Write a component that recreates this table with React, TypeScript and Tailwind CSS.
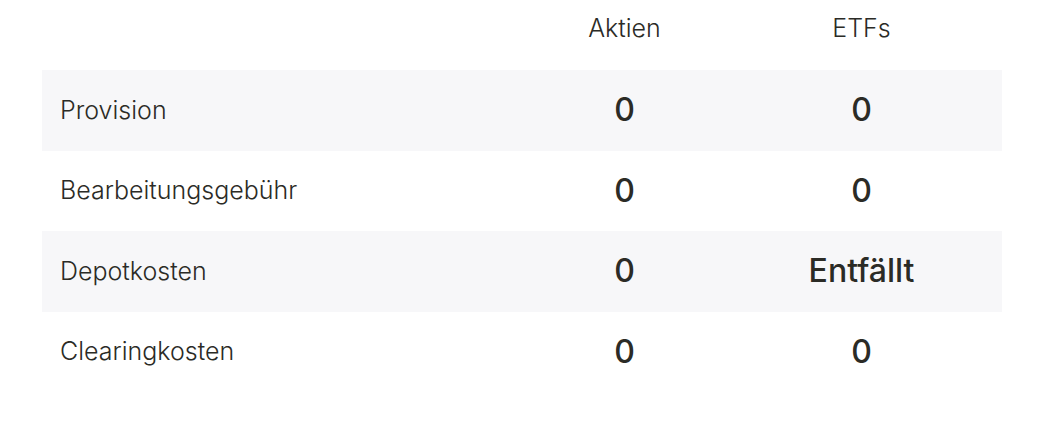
const rows = [
  { label: 'Provision', aktien: '0', etfs: '0' },
  { label: 'Bearbeitungsgebühr', aktien: '0', etfs: '0' },
  { label: 'Depotkosten', aktien: '0', etfs: 'Entfällt' },
  { label: 'Clearingkosten', aktien: '0', etfs: '0' },
];

export default function App() {
  return (
    <div
      className="min-h-screen bg-white px-[42px] text-[#2b2b26]"
      style={{ fontFamily: 'Inter, "Noto Sans", sans-serif' }}
    >
      <div className="w-[960px]">
        <div className="grid h-[70px] grid-cols-[1fr_237px_237px] pr-[22px] pt-[10px] text-[25px] font-light">
          <div />
          <div className="text-center">Aktien</div>
          <div className="text-center">ETFs</div>
        </div>
        {rows.map((row, i) => (
          <div
            key={row.label}
            className={
              'grid h-[80.5px] grid-cols-[1fr_237px_237px] items-center pr-[22px] ' +
              (i % 2 === 0 ? 'bg-[#f7f7f9]' : 'bg-white')
            }
          >
            <div className="pl-[18px] text-[25px] font-light">{row.label}</div>
            <div className="text-center text-[32px] font-medium">{row.aktien}</div>
            <div className="text-center text-[32px] font-medium">{row.etfs}</div>
          </div>
        ))}
      </div>
    </div>
  );
}
